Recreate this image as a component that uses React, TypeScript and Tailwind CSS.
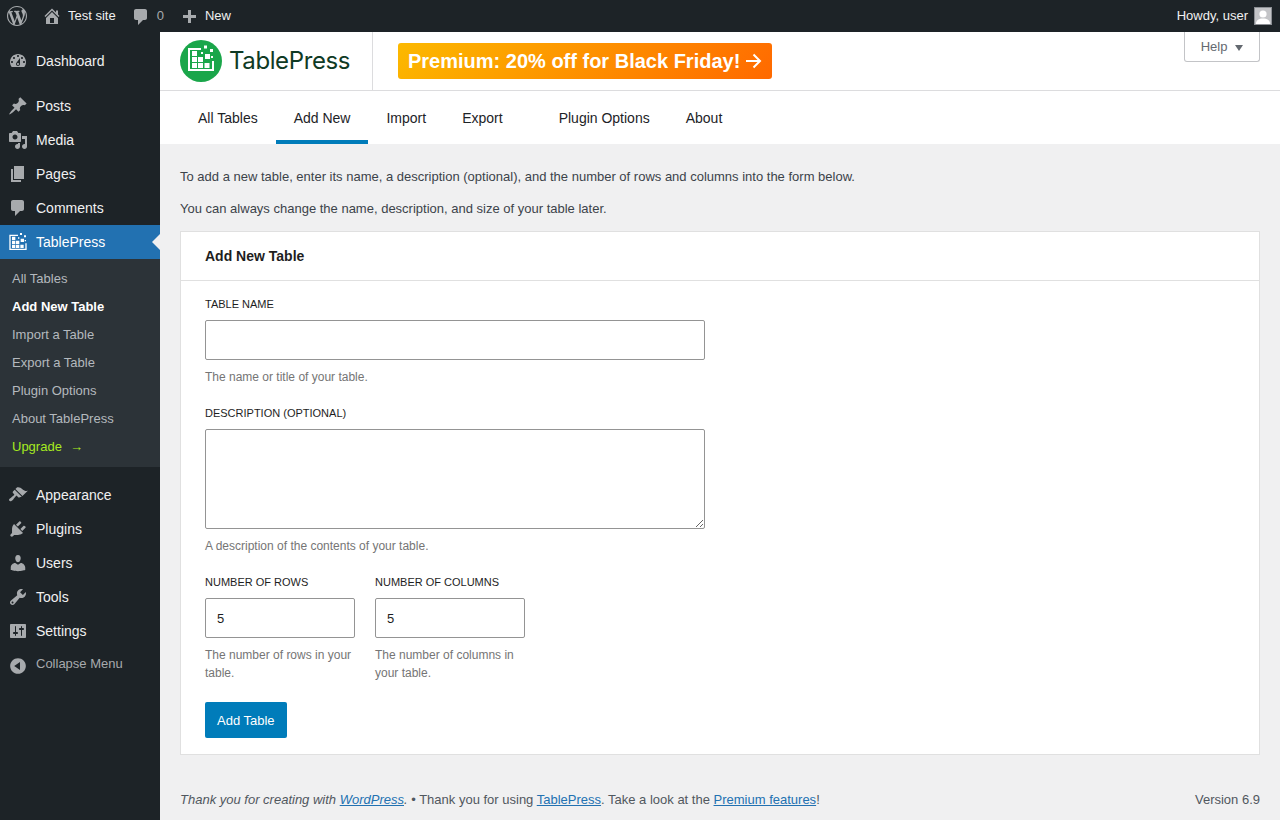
import React from 'react';

const D = ({ d, size = 20, className = '' }: { d: string; size?: number; className?: string }) => (
  <svg width={size} height={size} viewBox="0 0 20 20" fill="currentColor" className={className}>
    <path d={d} />
  </svg>
);

const icons = {
  wp: 'M20 10c0-5.51-4.49-10-10-10C4.48 0 0 4.49 0 10c0 5.52 4.48 10 10 10 5.51 0 10-4.48 10-10zM7.78 15.37L4.37 6.22c.55-.02 1.17-.08 1.17-.08.5-.06.44-1.13-.06-1.11 0 0-1.45.11-2.37.11-.18 0-.37 0-.58-.01C4.12 2.69 6.87 1.11 10 1.11c2.33 0 4.45.87 6.05 2.34-.68-.11-1.65.39-1.65 1.58 0 .74.45 1.36.9 2.1.35.61.55 1.36.55 2.46 0 1.49-1.4 5-1.4 5l-3.03-8.37c.54-.02.82-.17.82-.17.5-.05.44-1.25-.06-1.22 0 0-1.44.12-2.38.12-.87 0-2.33-.12-2.33-.12-.5-.03-.56 1.2-.06 1.22l.92.08 1.26 3.41zM17.41 10c.24-.64.74-1.87.43-4.25.7 1.29 1.05 2.71 1.05 4.25 0 3.29-1.73 6.24-4.4 7.78.97-2.59 1.94-5.2 2.92-7.78zM6.1 18.09C3.12 16.65 1.11 13.53 1.11 10c0-1.3.23-2.48.72-3.59C3.25 10.3 4.67 14.2 6.1 18.09zm4.03-6.63l2.58 6.98c-.86.29-1.76.45-2.71.45-.79 0-1.57-.11-2.29-.33.81-2.38 1.62-4.74 2.42-7.1z',
  home: 'M16 8.5l1.53 1.53-1.06 1.06L10 4.62l-6.47 6.47-1.06-1.06L10 2.5l4 4v-2h2v4zm-6-2.46l6 5.99V18H4v-5.97zM12 17v-5H8v5h4z',
  comment: 'M5 2h9c1.1 0 2 .9 2 2v7c0 1.1-.9 2-2 2h-2l-5 5v-5H5c-1.1 0-2-.9-2-2V4c0-1.1.9-2 2-2z',
  plus: 'M17 7v3h-5v5H9v-5H4V7h5V2h3v5h5z',
  dashboard: 'M3.76 16h12.48c1.1-1.37 1.76-3.11 1.76-5 0-4.42-3.58-8-8-8s-8 3.58-8 8c0 1.89.66 3.63 1.76 5zM10 4c.55 0 1 .45 1 1s-.45 1-1 1-1-.45-1-1 .45-1 1-1zM6 6c.55 0 1 .45 1 1s-.45 1-1 1-1-.45-1-1 .45-1 1-1zm8 0c.55 0 1 .45 1 1s-.45 1-1 1-1-.45-1-1 .45-1 1-1zm-5.37 5.55L12 7v6c0 1.1-.9 2-2 2s-2-.9-2-2c0-.57.24-1.08.63-1.45zM4 10c.55 0 1 .45 1 1s-.45 1-1 1-1-.45-1-1 .45-1 1-1zm12 0c.55 0 1 .45 1 1s-.45 1-1 1-1-.45-1-1 .45-1 1-1zm-5 3c0-.55-.45-1-1-1s-1 .45-1 1 .45 1 1 1 1-.45 1-1z',
  posts: 'M10.44 3.02l1.82-1.82 6.36 6.35-1.83 1.82c-1.05-.68-2.48-.57-3.41.36l-.75.75c-.92.93-1.04 2.35-.35 3.41l-1.83 1.82-2.41-2.41-2.8 2.79c-.42.42-3.38 2.71-3.8 2.29s1.86-3.39 2.28-3.81l2.79-2.79L4.1 9.36l1.83-1.82c1.05.69 2.48.57 3.4-.36l.75-.75c.93-.92 1.05-2.35.36-3.41z',
  media: 'M13 11V4c0-.55-.45-1-1-1h-1.67L9 1H5L3.67 3H2c-.55 0-1 .45-1 1v7c0 .55.45 1 1 1h10c.55 0 1-.45 1-1zM7 4.5c1.38 0 2.5 1.12 2.5 2.5S8.38 9.5 7 9.5 4.5 8.38 4.5 7 5.62 4.5 7 4.5zM14 6h5v10.5c0 1.38-1.12 2.5-2.5 2.5S14 17.88 14 16.5s1.12-2.5 2.5-2.5c.17 0 .34.02.5.05V9h-3V6zm-4 8.05V13h2v3.5c0 1.38-1.12 2.5-2.5 2.5S7 17.88 7 16.5 8.12 14 9.5 14c.17 0 .34.02.5.05z',
  pages: 'M6 15V2h10v13H6zm-1 1h8v2H3V5h2v11z',
  appearance: 'M14.48 11.06L7.41 3.99l1.5-1.5c.5-.56 2.3-.47 3.51.32 1.21.8 1.43 1.28 2.91 2.1 1.18.64 2.45 1.26 4.45.85zm-.71.71L6.7 4.7 4.93 6.47c-.39.39-.39 1.02 0 1.41l1.06 1.06c.39.39.39 1.03 0 1.42-.6.6-1.43 1.11-2.21 1.69-.35.26-.7.53-1.01.84C1.43 13.23.4 14.75 1.4 15.75c.99 1 2.52-.03 3.86-1.37.31-.31.58-.66.84-1.01.58-.78 1.09-1.61 1.69-2.21.39-.39 1.02-.39 1.41 0l1.06 1.06c.39.39 1.02.39 1.41 0z',
  plugins: 'M13.11 4.36L9.87 7.6 8 5.73l3.24-3.24c.35-.34 1.05-.2 1.56.32.52.51.66 1.21.31 1.55zm-8 1.77l.91-1.12 9.01 9.01-1.19.84c-.71.71-2.63 1.16-3.82 1.16H6.14L4.9 17.26c-.59.59-1.54.59-2.12 0-.59-.58-.59-1.53 0-2.12l1.24-1.24v-3.88c0-1.13.4-3.19 1.09-3.89zm7.26 3.97l3.24-3.24c.34-.35 1.04-.21 1.55.31.52.51.66 1.21.31 1.55l-3.24 3.25z',
  users: 'M10 9.25c-2.27 0-2.73-3.44-2.73-3.44C7 4.02 7.82 2 9.97 2c2.16 0 2.98 2.02 2.71 3.81 0 0-.41 3.44-2.68 3.44zm0 2.57L12.72 10c2.39 0 4.52 2.33 4.52 4.53v2.49s-3.65 1.13-7.24 1.13c-3.65 0-7.24-1.13-7.24-1.13v-2.49c0-2.25 1.94-4.48 4.47-4.48z',
  tools: 'M16.68 9.77c-1.34 1.34-3.3 1.67-4.95.99l-5.41 6.52c-.99.99-2.59.99-3.58 0s-.99-2.59 0-3.57l6.52-5.42c-.68-1.65-.35-3.61.99-4.95 1.28-1.28 3.12-1.62 4.72-1.06l-2.89 2.89 2.82 2.82 2.86-2.87c.53 1.58.18 3.39-1.08 4.66zM3.81 16.21c.4.39 1.04.39 1.43 0 .4-.4.4-1.04 0-1.43-.39-.4-1.03-.4-1.43 0-.39.39-.39 1.03 0 1.43z',
  settings: 'M18 16V4c0-.55-.45-1-1-1H3c-.55 0-1 .45-1 1v12c0 .55.45 1 1 1h14c.55 0 1-.45 1-1zM8 11h1c.55 0 1 .45 1 1s-.45 1-1 1H8v1.5c0 .28-.22.5-.5.5s-.5-.22-.5-.5V13H6c-.55 0-1-.45-1-1s.45-1 1-1h1V5.5c0-.28.22-.5.5-.5s.5.22.5.5V11zm5-2h-1c-.55 0-1-.45-1-1s.45-1 1-1h1V5.5c0-.28.22-.5.5-.5s.5.22.5.5V7h1c.55 0 1 .45 1 1s-.45 1-1 1h-1v5.5c0 .28-.22.5-.5.5s-.5-.22-.5-.5V9z',
  collapse: 'M10 2.16c4.33 0 7.84 3.51 7.84 7.84s-3.51 7.84-7.84 7.84S2.16 14.33 2.16 10 5.71 2.16 10 2.16zm2 11.72V6.12L6.18 9.97z',
};

const TpMark = ({ size = 20, className = '' }: { size?: number; className?: string }) => (
  <svg width={size} height={size} viewBox="0 0 30 30" fill="currentColor" className={className}>
    <path d="M2 4h13v2H4v19h22v-8h2v10H2z" />
    <path d="M6 7h5v5H6zM6 13h5v5H6zM12 13h5v5h-5zM6 19h5v5H6zM12 19h5v5h-5zM18.500 19h5v5h-5zM19 10h5v5h-5zM18 1.500h3v3h-3zM24 5h3v3h-3zM15 8h2v2h-2zM25 12h2v2h-2z" />
  </svg>
);

const MenuItem = ({ icon, label, active = false, custom }: { icon?: string; label: string; active?: boolean; custom?: React.ReactNode }) => (
  <div className={`relative flex h-[34px] items-center text-sm ${active ? 'bg-[#2271b1] text-white' : 'text-[#f0f0f1]'}`}>
    <span className={`flex w-9 justify-center ${active ? 'text-white' : 'text-[#a7aaad]'}`}>
      {custom ?? <D d={icon as string} />}
    </span>
    <span>{label}</span>
    {active && (
      <span className="absolute right-0 top-1/2 -mt-2 h-0 w-0 border-y-8 border-r-8 border-y-transparent border-r-[#f0f0f1]" />
    )}
  </div>
);

const SubItem = ({ label, className = 'text-[#b4b9be]' }: { label: React.ReactNode; className?: string }) => (
  <div className={`flex h-7 items-center pl-3 text-[13px] ${className}`}>{label}</div>
);

const Sidebar = () => (
  <aside className="w-40 shrink-0 bg-[#1d2327] pt-3">
    <MenuItem icon={icons.dashboard} label="Dashboard" />
    <div className="mt-[11px]" />
    <MenuItem icon={icons.posts} label="Posts" />
    <MenuItem icon={icons.media} label="Media" />
    <MenuItem icon={icons.pages} label="Pages" />
    <MenuItem icon={icons.comment} label="Comments" />
    <MenuItem label="TablePress" active custom={<TpMark />} />
    <div className="bg-[#2c3338] py-[6px]">
      <SubItem label="All Tables" />
      <SubItem label="Add New Table" className="font-semibold text-white" />
      <SubItem label="Import a Table" />
      <SubItem label="Export a Table" />
      <SubItem label="Plugin Options" />
      <SubItem label="About TablePress" />
      <SubItem label={<>Upgrade <span className="ml-2">→</span></>} className="text-[#a6ea1f]" />
    </div>
    <div className="mt-[11px]" />
    <MenuItem icon={icons.appearance} label="Appearance" />
    <MenuItem icon={icons.plugins} label="Plugins" />
    <MenuItem icon={icons.users} label="Users" />
    <MenuItem icon={icons.tools} label="Tools" />
    <MenuItem icon={icons.settings} label="Settings" />
    <div className="flex h-[34px] items-center text-[13px] text-[#a7aaad]">
      <span className="flex w-9 justify-center pt-0.5"><D d={icons.collapse} /></span>
      <span className="-mt-0.5">Collapse Menu</span>
    </div>
  </aside>
);

const TopBar = () => (
  <header className="flex h-8 items-center bg-[#1d2327] text-[13px] text-[#f0f0f1]">
    <span className="ml-[7px] text-[#a7aaad]"><D d={icons.wp} /></span>
    <span className="ml-[15px] text-[#a7aaad]"><D d={icons.home} /></span>
    <span className="ml-[6px]">Test site</span>
    <span className="ml-[15px] mt-px text-[#a7aaad]"><D d={icons.comment} /></span>
    <span className="ml-[6px] text-[#a7aaad]">0</span>
    <span className="ml-[15px] mt-[3px] text-[#a7aaad]"><D d={icons.plus} /></span>
    <span className="ml-[6px]">New</span>
    <span className="ml-auto">Howdy, user</span>
    <span className="ml-1.5 mr-2 flex h-[18px] w-[18px] items-end justify-center overflow-hidden border border-[#8c8f94] bg-[#c3c4c7]">
      <svg width="16" height="16" viewBox="0 0 16 16" fill="#fff">
        <circle cx="8" cy="6" r="3.6" />
        <path d="M1 16c0-4 3-5.5 7-5.5s7 1.500 7 5.500z" />
      </svg>
    </span>
  </header>
);

const tabs = ['All Tables', 'Add New', 'Import', 'Export'];
const tabs2 = ['Plugin Options', 'About'];

const Tab = ({ label, active = false }: { label: string; active?: boolean }) => (
  <div className={`flex h-[53px] items-center border-b-4 px-[18px] pt-1 text-sm ${active ? 'border-[#007cba]' : 'border-transparent'}`}>
    {label}
  </div>
);

const PluginHeader = () => (
  <div className="bg-white text-[#1d2327]">
    <div className="relative flex h-[59px] items-stretch border-b border-[#dcdcde]">
      <div className="flex w-[213px] items-center border-r border-[#dcdcde] pl-5">
        <span className="flex h-[42px] w-[42px] items-center justify-center rounded-full bg-[#1aa64a] text-white">
          <TpMark size={30} className="mb-1" />
        </span>
        <span className="ml-[7px] font-['Inter',sans-serif] text-[24px] tracking-[-0.4px] text-[#0f3a24]">TablePress</span>
      </div>
      <div className="ml-[25px] flex items-center">
        <div className="flex h-9 items-center rounded-[3px] bg-[linear-gradient(135deg,#fcb900,#ff6900)] px-2.5 text-xl font-bold text-white">
          Premium: 20% off for Black Friday!
          <svg width="18" height="18" viewBox="0 0 18 18" fill="none" stroke="currentColor" strokeWidth="2" className="ml-1"><path d="M2 9h14M9.500 2.500 16 9l-6.500 6.500" /></svg>
        </div>
      </div>
      <div className="absolute right-5 top-0 flex h-[30px] w-[76px] items-center justify-center gap-2 rounded-b-[3px] border border-t-0 border-[#c3c4c7] bg-white text-[13px] text-[#646970]">
        Help
        <span className="mt-0.5 h-0 w-0 border-x-[4.5px] border-t-[6px] border-x-transparent border-t-[#646970]" />
      </div>
    </div>
    <nav className="flex px-5">
      {tabs.map((t) => <Tab key={t} label={t} active={t === 'Add New'} />)}
      <div className="w-5" />
      {tabs2.map((t) => <Tab key={t} label={t} />)}
    </nav>
  </div>
);

const inputCls = 'block rounded-[2px] border border-[#949494] bg-white px-[11px] text-[13px] text-[#1e1e1e]';

const Label = ({ children }: { children: React.ReactNode }) => (
  <div className="text-[11px] uppercase leading-[17px] text-[#1e1e1e]">{children}</div>
);

const Hint = ({ children }: { children: React.ReactNode }) => (
  <p className="mt-2 text-xs leading-[18px] text-[#757575]">{children}</p>
);

const Form = () => (
  <section className="mt-[13px] border border-[#e0e0e0] bg-white">
    <h2 className="border-b border-[#e0e0e0] px-6 py-[15px] text-sm font-semibold leading-[18px] text-[#1e1e1e]">Add New Table</h2>
    <div className="px-6 pb-4 pt-[15px]">
      <Label>Table Name</Label>
      <input type="text" className={`${inputCls} mt-[7px] h-10 w-[500px]`} />
      <Hint>The name or title of your table.</Hint>
      <div className="mt-[19px]"><Label>Description (optional)</Label></div>
      <textarea className={`${inputCls} mt-[7px] h-[100px] w-[500px]`} />
      <Hint>A description of the contents of your table.</Hint>
      <div className="mt-[19px] flex gap-5">
        <div className="w-[150px]">
          <Label>Number of Rows</Label>
          <input type="text" defaultValue="5" className={`${inputCls} mt-[7px] h-10 w-[150px]`} />
          <Hint>The number of rows in your table.</Hint>
        </div>
        <div className="w-[150px]">
          <Label>Number of Columns</Label>
          <input type="text" defaultValue="5" className={`${inputCls} mt-[7px] h-10 w-[150px]`} />
          <Hint>The number of columns in your table.</Hint>
        </div>
      </div>
      <button className="mt-5 block h-9 rounded-[2px] bg-[#007cba] px-3 text-[13px] text-white">Add Table</button>
    </div>
  </section>
);

const linkCls = 'text-[#2271b1] underline';

export default function App() {
  return (
    <div className="flex h-[820px] w-[1280px] flex-col overflow-hidden bg-[#f0f0f1] font-['Liberation_Sans',Arial,sans-serif]">
      <TopBar />
      <div className="flex min-h-0 flex-1">
        <Sidebar />
        <main className="flex min-w-0 flex-1 flex-col">
          <PluginHeader />
          <div className="px-5 pt-[23px] text-[13px] leading-[19px] text-[#3c434a]">
            <p>To add a new table, enter its name, a description (optional), and the number of rows and columns into the form below.</p>
            <p className="mt-[13px]">You can always change the name, description, and size of your table later.</p>
            <Form />
            <footer className="mt-[35px] flex justify-between text-[#50575e]">
              <p><em>Thank you for creating with <a className={linkCls}>WordPress</a>.</em> • Thank you for using <a className={linkCls}>TablePress</a>. Take a look at the <a className={linkCls}>Premium features</a>!</p>
              <span>Version 6.9</span>
            </footer>
          </div>
        </main>
      </div>
    </div>
  );
}
